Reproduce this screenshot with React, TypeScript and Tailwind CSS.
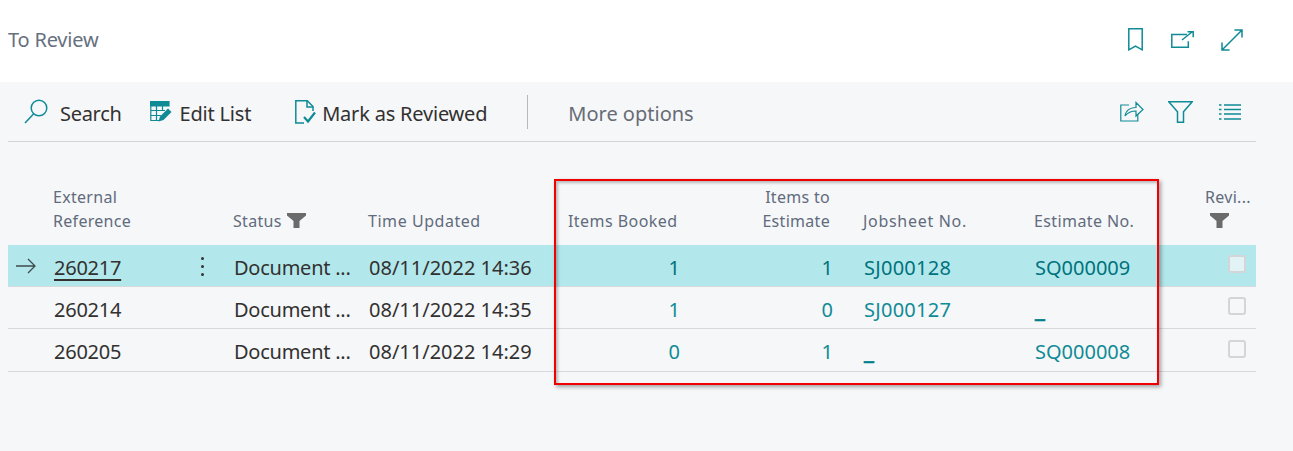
import React from 'react';

const teal = '#0f8b96';

function Icon({ className, vb, children }: { className: string; vb: string; children: React.ReactNode }) {
  return (
    <svg className={className} viewBox={vb} fill="none" stroke={teal} strokeWidth="1.5">
      {children}
    </svg>
  );
}

function FunnelSolid() {
  return (
    <svg className="w-[19px] h-[15px]" viewBox="0 0 19 15" fill="#6b6b6b">
      <path d="M0 0h19v2.500l-6.500 5.500v7h-6v-7L0 2.500z" />
    </svg>
  );
}

function Checkbox({ tinted }: { tinted?: boolean }) {
  return (
    <div className={`w-[18px] h-[18px] rounded-[3px] border-2 border-[#d3d5d6] ${tinted ? 'bg-[#e2f3f6]' : 'bg-[#f6f7f9]'}`} />
  );
}

// the blank-value dash sits low and heavy in the reference
function Dash() {
  return <span className="text-[24px] leading-[20px] font-bold text-[#00808c] [-webkit-text-stroke:0.6px_#00808c]">_</span>;
}

const rows = [
  { ref: '260217', time: '08/11/2022 14:36', booked: '1', toEst: '1', job: 'SJ000128', est: 'SQ000009', active: true },
  { ref: '260214', time: '08/11/2022 14:35', booked: '1', toEst: '0', job: 'SJ000127', est: '_', active: false },
  { ref: '260205', time: '08/11/2022 14:29', booked: '0', toEst: '1', job: '_', est: 'SQ000008', active: false },
];

const cols = 'grid grid-cols-[39px_133px_44px_136px_196px_134px_152px_184px_164px_66px]';

export default function App() {
  return (
    <div className="relative w-[1293px] h-[451px] overflow-hidden bg-[#f6f7f9] font-['Noto_Sans','Open_Sans',sans-serif]">
      {/* Title bar */}
      <div className="h-[82px] bg-white flex items-center pl-2 pr-[50px]">
        <h1 className="text-[20px] text-[#66707f] -mt-[2px] tracking-[-0.2px]">To Review</h1>
        <div className="ml-auto flex items-center">
          <Icon className="w-[15px] h-[23px] -mt-1" vb="0 0 15 23">
            <path d="M.8.8h13.400v21l-6.700-3.800-6.700 3.800z" />
          </Icon>
          <Icon className="ml-[28px] w-[23px] h-[17px] -mt-[3px]" vb="0 0 23 17">
            <path d="M16 3.500H.8v12.700h16.500v-6" />
            <path d="M11 9l10-8M16.500.8h5.700v5.500" />
          </Icon>
          <Icon className="ml-[27px] w-[22px] h-[22px] -mt-[3px]" vb="0 0 22 22">
            <path d="M1 21L21 1M13.500 1H21v7.500M1 13.500V21h7.500" />
          </Icon>
        </div>
      </div>

      {/* Toolbar */}
      <div className="ml-2 w-[1248px] h-[60px] border-b border-[#d4d5d8] flex items-center text-[20px] tracking-[-0.2px] text-[#323130]">
        <Icon className="ml-4 w-[24px] h-[25px]" vb="0 0 24 25">
          <circle cx="15" cy="9" r="7.800" />
          <path d="M9.500 15L1 24" />
        </Icon>
        <span className="ml-3 pt-1 tracking-[-0.3px]">Search</span>
        <svg className="ml-[28px] w-[22px] h-[21px]" viewBox="0 0 22 21" fill="none" stroke={teal} strokeWidth="1.200">
          <path d="M0 0h19v5H0z" fill={teal} />
          <path d="M.8 5v14.500H10M.8 19.500M6.500 5v14M12.500 5v5M.8 9.500H15M.8 14.500h10" />
          <path d="M8.500 20.500l1.500-5 8-8 3.500 3.500-8 8z" fill={teal} stroke="none" />
        </svg>
        <span className="ml-2 pt-1">Edit List</span>
        <svg className="ml-[44px] w-[21px] h-[24px]" viewBox="0 0 21 24" fill="none" stroke={teal} strokeWidth="1.500">
          <path d="M9 23H.8V.8h11.500L18 6.500V11" />
          <path d="M12 1v6h6" />
          <path d="M9 17l4 4.500 7-9" strokeWidth="2.200" />
        </svg>
        <span className="ml-[6px] pt-1">Mark as Reviewed</span>
        <div className="ml-[40px] w-px h-[34px] bg-[#b6b8bc]" />
        <span className="ml-10 pt-1 tracking-[0px] text-[#666c76]">More options</span>
        <div className="ml-auto flex items-center mr-[15px]">
          <Icon className="w-[24px] h-[21px]" vb="0 0 24 21">
            <path d="M9 4H.8v16h17v-7" strokeWidth="1.200" />
            <path d="M5 15c1-6 6-8.500 11-8.500V1.500l7 7-7 6.500v-5c-4 0-8 1-11 5z" strokeWidth="1.200" />
          </Icon>
          <Icon className="ml-6 w-[25px] h-[22px]" vb="0 0 25 22">
            <path d="M.8.8h23.400l-8.700 10v10.400h-6V10.800z" />
          </Icon>
          <Icon className="ml-[26px] w-[22px] h-[16px]" vb="0 0 22 16">
            <path d="M0 1h2.500M5 1h17M0 5.500h2.500M5 5.500h17M0 10h2.500M5 10h17M0 15h2.500M5 15h17" />
          </Icon>
        </div>
      </div>

      {/* List */}
      <div className="ml-2 w-[1248px]">
        <div className={`${cols} h-[103px] items-end pb-[12px] text-[16px] leading-[24px] tracking-[0.3px] text-[#616b7c]`}>
          <div />
          <div className="col-span-2 pl-[6px]">
            External
            <br />
            Reference
          </div>
          <div className="flex items-center gap-[5px] pl-[9px]">
            <span>Status</span>
            <span className="-mt-[1px]"><FunnelSolid /></span>
          </div>
          <div className="pl-2 tracking-[0.55px]">Time Updated</div>
          <div className="pl-[12px] tracking-[0.45px]">Items Booked</div>
          <div className="text-right pr-3">
            Items to
            <br />
            Estimate
          </div>
          <div className="pl-[21px] tracking-[0.7px]">Jobsheet No.</div>
          <div className="pl-2 tracking-[0.4px]">Estimate No.</div>
          <div className="pl-[15px]">
            Revi...
            <div className="h-[24px] pl-[5px] pt-[4px] flex items-start"><FunnelSolid /></div>
          </div>
        </div>
        {rows.map((r) => (
          <div
            key={r.ref}
            className={`${cols} h-[42px] last:h-[43px] items-center border-b border-[#d8d9dc] text-[20px] text-[#323130] ${r.active ? 'bg-[#b2e8ec]' : ''}`}
          >
            <div className="pl-[8px] flex items-center">
              {r.active && (
                <svg className="w-[20px] h-[16px]" viewBox="0 0 20 16" fill="none" stroke="#3f4a4c" strokeWidth="1.300">
                  <path d="M0 8h19M12 1l7 7-7 7" />
                </svg>
              )}
            </div>
            <div className={`pl-[7px] pt-1 tracking-[-0.25px] ${r.active ? 'underline underline-offset-[4px]' : ''}`}>{r.ref}</div>
            <div className="flex justify-center pt-[2px]">
              {r.active && (
                <div className="flex flex-col gap-[5px]">
                  <span className="w-[3px] h-[3px] bg-[#333] rounded-full" />
                  <span className="w-[3px] h-[3px] bg-[#333] rounded-full" />
                  <span className="w-[3px] h-[3px] bg-[#333] rounded-full" />
                </div>
              )}
            </div>
            <div className="pl-[10px] pt-1 tracking-[-0.25px]">Document ...</div>
            <div className="pl-[9px] pt-1">{r.time}</div>
            <div className={`text-right pr-[10px] pt-1 ${r.active ? 'text-[#00727c]' : 'text-[#0f8b96]'}`}>{r.booked}</div>
            <div className={`text-right pr-[9px] pt-1 ${r.active ? 'text-[#00727c]' : 'text-[#0f8b96]'}`}>{r.toEst}</div>
            <div className={`pl-[22px] pt-1 tracking-[0.25px] ${r.active ? 'text-[#00727c]' : 'text-[#0f8b96]'}`}>{r.job === '_' ? <Dash /> : r.job}</div>
            <div className={`pl-[9px] pt-1 ${r.active ? 'text-[#00727c]' : 'text-[#0f8b96]'}`}>{r.est === '_' ? <Dash /> : r.est}</div>
            <div className="pl-[38px] -mt-[3px]"><Checkbox tinted={r.active} /></div>
          </div>
        ))}
      </div>

      {/* Red annotation drawn over the list */}
      <div className="absolute left-[554px] top-[179px] w-[605px] h-[206px] border-2 border-[#f00000] shadow-[2px_2px_4px_rgba(0,0,0,0.35),inset_2px_2px_3px_rgba(0,0,0,0.25)]" />
    </div>
  );
}
